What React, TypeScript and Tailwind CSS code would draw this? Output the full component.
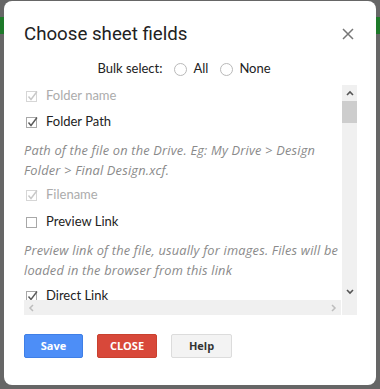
import React from "react";

const Check = ({ checked, disabled }: { checked: boolean; disabled?: boolean }) => {
  const border = disabled ? "#d6d6d6" : "#a8a8a8";
  const mark = disabled ? "#c8c8c8" : "#5a5a5a";
  return (
    <svg width="14" height="14" viewBox="0 0 14 14" className="shrink-0">
      <rect x="1.5" y="2.5" width="10" height="10" fill="#fff" stroke={border} strokeWidth="1" />
      {checked && <path d="M3.5 7.5 L6 10.5 L12 2.5" fill="none" stroke={mark} strokeWidth="1.4" />}
    </svg>
  );
};

const Radio = () => (
  <span className="block w-[13px] h-[13px] rounded-full border border-[#b9b9b9] bg-white shrink-0" />
);

const Row = ({ label, checked, disabled, className = "" }: { label: string; checked: boolean; disabled?: boolean; className?: string }) => (
  <div className={`h-[22px] flex items-center gap-[7px] pl-[1px] shrink-0 ${className}`}>
    <Check checked={checked} disabled={disabled} />
    <span className={`text-[13px] ${disabled ? "text-[#acacac]" : "text-[#222]"}`}>{label}</span>
  </div>
);

const Desc = ({ children }: { children: React.ReactNode }) => (
  <div
    className="mt-[7px] text-[12.8px] leading-[20px] italic tracking-[0.2px] text-[#8a8a8a] shrink-0"
    style={{ fontFamily: "'Open Sans', sans-serif" }}
  >
    {children}
  </div>
);

export default function App() {
  return (
    <div className="w-[380px] h-[389px] bg-[#666] relative overflow-hidden" style={{ fontFamily: "Lato, 'Open Sans', sans-serif" }}>
      <div className="absolute left-0 right-0 top-[17px] h-[17px] bg-[#1e7a2a]" />
      <div className="absolute left-[4px] top-[1px] w-[372px] h-[384px] bg-white rounded-[8px] flex flex-col">
        <div className="flex items-center justify-between pl-[20px] pr-[22px] pt-[21px]">
          <h1 className="text-[18.7px] leading-[24px] text-[#222]" style={{ fontFamily: "Roboto, sans-serif" }}>Choose sheet fields</h1>
          <svg width="12" height="12" viewBox="0 0 12 12"><path d="M1 1 L11 11 M11 1 L1 11" stroke="#777" strokeWidth="1.5" /></svg>
        </div>
        <div className="mt-[15px] flex items-center justify-center text-[13px] text-[#222] h-[16px] pr-[12px]">
          <span>Bulk select:</span>
          <span className="ml-[12px]"><Radio /></span>
          <span className="ml-[6px]">All</span>
          <span className="ml-[12px]"><Radio /></span>
          <span className="ml-[6px]">None</span>
        </div>
        <div className="mt-[8px] ml-[20px] flex h-[230px] w-[332px]">
          <div className="flex flex-col w-[317px]">
            <div className="h-[215px] overflow-hidden">
              <div className="w-[318px] flex flex-col">
                <Row label="Folder name" checked disabled />
                <Row label="Folder Path" checked className="mt-[4px]" />
                <Desc>Path of the file on the Drive. Eg: My Drive &gt; Design Folder &gt; Final Design.xcf.</Desc>
                <Row label="Filename" checked disabled className="mt-[4px]" />
                <Row label="Preview Link" checked={false} className="mt-[5px]" />
                <Desc>Preview link of the file, usually for images. Files will be loaded in the browser from this link</Desc>
                <Row label="Direct Link" checked className="mt-[5px]" />
              </div>
            </div>
            <div className="h-[15px] bg-[#f0f0f0] flex items-center justify-between px-[4px]">
              <svg width="6" height="8" viewBox="0 0 6 8"><path d="M5 1 L2 4 L5 7" fill="none" stroke="#bdbdbd" strokeWidth="1.5" /></svg>
              <svg width="6" height="8" viewBox="0 0 6 8"><path d="M1 1 L4 4 L1 7" fill="none" stroke="#bdbdbd" strokeWidth="1.5" /></svg>
            </div>
          </div>
          <div className="w-[15px] ml-[1px] bg-[#f0f0f0] flex flex-col items-center">
            <div className="h-[16px] flex items-center justify-center">
              <svg width="8" height="6" viewBox="0 0 8 6"><path d="M1 5 L4 2 L7 5" fill="none" stroke="#555" strokeWidth="1.6" /></svg>
            </div>
            <div className="w-[15px] h-[22px] bg-[#cdcdcd]" />
            <div className="flex-1" />
            <div className="h-[32px] flex items-start justify-center pt-[6px]">
              <svg width="8" height="6" viewBox="0 0 8 6"><path d="M1 1 L4 4 L7 1" fill="none" stroke="#555" strokeWidth="1.6" /></svg>
            </div>
          </div>
        </div>
        <div className="mt-[19px] ml-[20px] flex gap-[14px]" style={{ fontFamily: "'Open Sans', sans-serif" }}>
          <button className="w-[59px] h-[24px] rounded-[2px] bg-[#4d8ef7] border border-[#3f7fe6] text-white text-[11px] font-bold">Save</button>
          <button className="w-[60px] h-[24px] rounded-[2px] bg-[#d8483a] border border-[#c9412f] text-white text-[11px] font-bold">CLOSE</button>
          <button className="w-[61px] h-[24px] rounded-[2px] bg-[#f3f3f3] border border-[#dcdcdc] text-[#333] text-[11px] font-bold">Help</button>
        </div>
      </div>
    </div>
  );
}
